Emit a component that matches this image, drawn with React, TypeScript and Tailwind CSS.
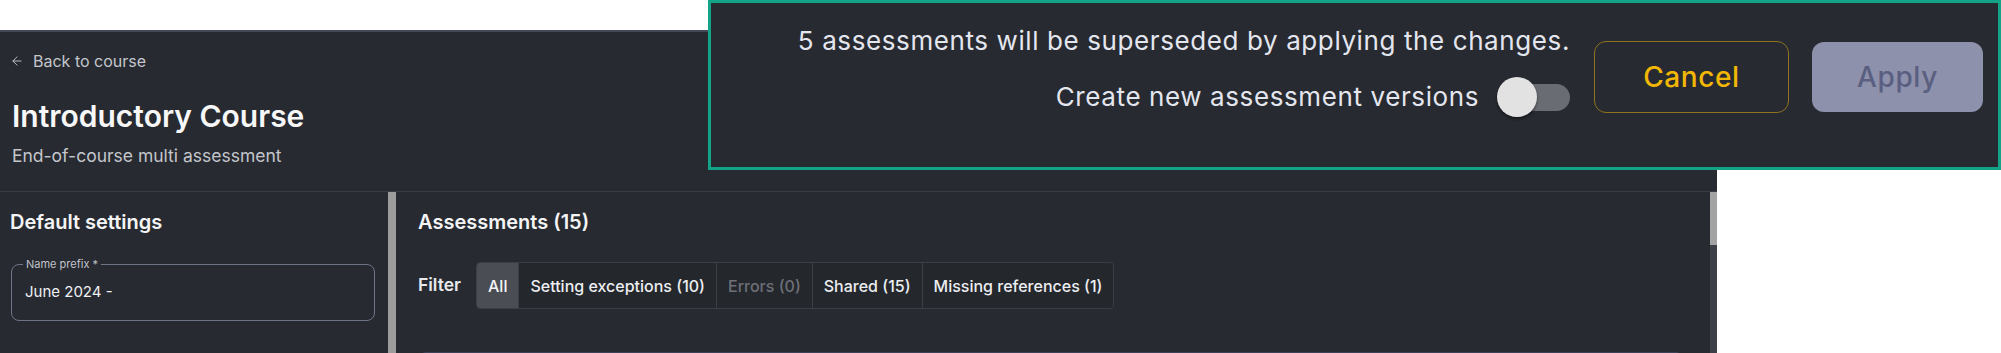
import { ArrowLeft } from "lucide-react";

const tabs = [
  { label: "All", active: true },
  { label: "Setting exceptions (10)" },
  { label: "Errors (0)", disabled: true },
  { label: "Shared (15)" },
  { label: "Missing references (1)" },
];

export default function App() {
  return (
    <div className="relative w-[2001px] h-[353px] overflow-hidden bg-white font-[Inter,sans-serif]">
      <div className="pt-[30px] w-[1717px] h-full">
        <div className="flex flex-col h-full bg-[#272a30] border-t-2 border-[#434857]">
          <div className="pl-[10px] pt-[17px] pb-[23px] border-b border-[#3a3d44]">
            <div className="flex items-center h-[24px] text-[16px] text-[#c4c6cc]">
              <ArrowLeft className="w-[14px] h-[14px]" strokeWidth={1.6} />
              <span className="ml-[9px]">Back to course</span>
            </div>
            <h1 className="mt-[23px] ml-[2px] text-[30px] leading-[40px] font-semibold text-[#f7f7f8]">
              Introductory Course
            </h1>
            <p className="mt-[8px] ml-[2px] text-[17.5px] leading-[24px] text-[#c4c6cc]">End-of-course multi assessment</p>
          </div>
          <div className="flex flex-1 min-h-0">
            <div className="w-[388px] pl-[10px] pr-[13px] pt-[16px]">
              <h2 className="text-[20px] leading-[28px] font-semibold text-[#f4f4f6]">Default settings</h2>
              <div className="relative mt-[28px] ml-[1px] h-[57px] rounded-[8px] border border-[#6f7588] flex items-center pl-[13px]">
                <span className="absolute left-[11px] -top-[9px] px-[3px] bg-[#272a30] text-[11px] leading-[16px] text-[#c0c3ca]">
                  Name prefix *
                </span>
                <span className="text-[15px] text-[#eef0f3]">June 2024 -</span>
              </div>
            </div>
            <div className="w-[8px] bg-[#9d9d9d]" />
            <div className="flex-1 pl-[22px] pt-[16px]">
              <h2 className="text-[20px] leading-[28px] font-semibold text-[#f4f4f6]">Assessments (15)</h2>
              <div className="mt-[26px] flex items-center h-[47px]">
                <span className="text-[17.5px] font-semibold text-[#e8e9ec] mr-[15px]">Filter</span>
                <div className="flex h-full rounded-[4px] border border-[#3b3e45] bg-[#24272c] overflow-hidden">
                  {tabs.map((t, i) => (
                    <div
                      key={t.label}
                      className={
                        "flex items-center px-[11px] text-[16px] font-medium " +
                        (i > 0 ? "border-l border-[#3b3e45] " : "") +
                        (t.active ? "bg-[#4a4d54] text-[#f4f4f6] " : "") +
                        (t.disabled ? "text-[#6d7078]" : "text-[#eceef1]")
                      }
                    >
                      {t.label}
                    </div>
                  ))}
                </div>
              </div>
              <div className="mt-[43px] ml-[2px] w-[1262px] h-[20px] rounded-t-[6px] border-t border-x border-[#3b4258]" />
            </div>
            <div className="w-[7px] bg-[#3c3f45] flex flex-col">
              <div className="h-[53px] bg-[#a3a3a3]" />
            </div>
          </div>
        </div>
      </div>

      <div className="absolute top-0 left-[708px] w-[1293px] h-[170px] border-[3px] border-[#13a386] bg-[#272a30] flex justify-end items-start pr-[15px]">
        <div className="flex flex-col items-end pt-[21px]">
          <p className="text-[26px] leading-[34px] tracking-[0.6px] text-[#e4e6ef]">
            5 assessments will be superseded by applying the changes.
          </p>
          <div className="mt-[19px] flex items-center h-[40px]">
            <span className="text-[26px] leading-[34px] tracking-[0.6px] text-[#e4e6ef]">Create new assessment versions</span>
            <div className="relative ml-[18px] w-[73px] h-[40px]">
              <div className="absolute left-[7px] right-0 top-[7px] h-[27px] rounded-full bg-[#696c72]" />
              <div className="absolute left-0 top-0 w-[40px] h-[40px] rounded-full bg-[#e2e2e2] shadow-[0_2px_3px_rgba(0,0,0,0.45)]" />
            </div>
          </div>
        </div>
        <div className="flex items-center gap-[23px] ml-[24px] pt-[38px]">
          <button className="w-[195px] h-[72px] rounded-[12px] border-[1.5px] border-[#8f731e] text-[28px] tracking-[0.6px] font-medium text-[#f2b705]">
            Cancel
          </button>
          <button className="w-[171px] h-[70px] rounded-[12px] bg-[#8d91ab] text-[28px] tracking-[0.6px] font-medium text-[#5a5f81]">
            Apply
          </button>
        </div>
      </div>
    </div>
  );
}
